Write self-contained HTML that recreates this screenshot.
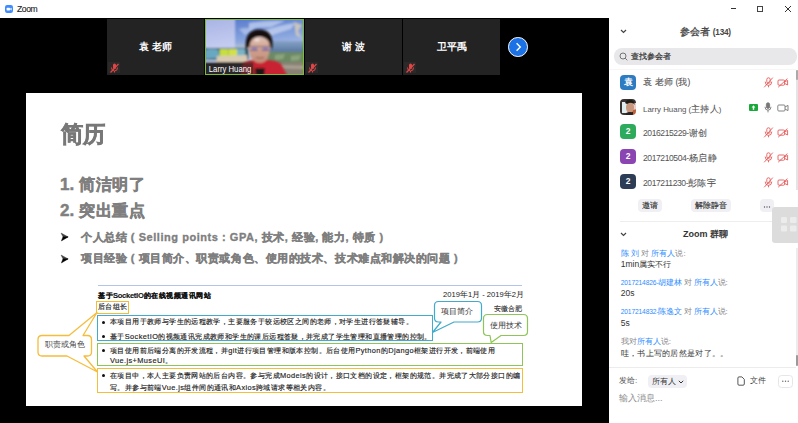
<!DOCTYPE html>
<html><head><meta charset="utf-8">
<style>
*{margin:0;padding:0;box-sizing:border-box}
html,body{width:798px;height:423px;overflow:hidden;background:#000;font-family:"Liberation Sans",sans-serif}
.a{position:absolute;white-space:nowrap}
#title{left:0;top:0;width:798px;height:18px;background:#fff}
.tile{position:absolute;top:19px;height:56px;background:#232323}
.tname{position:absolute;left:0;right:0;top:22px;text-align:center;color:#fff;font-size:9.5px;font-weight:bold}
.mic{position:absolute;left:1px;top:43px;width:12px;height:11px;background:#2a2a2a}
#slide{left:26px;top:93px;width:556px;height:313px;background:#fff}
#panel{left:609px;top:18px;width:189px;height:405px;background:#fff}
.g{color:#7f7f7f;font-weight:bold;-webkit-text-stroke:0.5px #7f7f7f}
.av{position:absolute;left:620.3px;width:15.5px;height:15.5px;border-radius:4px;color:#fff;font-size:8.5px;font-weight:bold;text-align:center;line-height:15.5px}
.pn{position:absolute;left:643px;font-size:8.5px;color:#555;white-space:nowrap}
.cj{font-size:9px;letter-spacing:0.4px;-webkit-text-stroke:0.1px #555}
.blue{color:#2d8cff}
.cg{color:#888}
.msg{position:absolute;left:620.7px;font-size:8px;color:#333;white-space:nowrap}
.btn{position:absolute;top:199px;height:13px;border-radius:4px;background:#f0f0f4;font-size:8px;color:#333;-webkit-text-stroke:0.15px #333;text-align:center;line-height:13px}
.rt{position:absolute;white-space:nowrap;font-size:7.4px;letter-spacing:0.39px;color:#222;-webkit-text-stroke:0.15px #222}
.box{position:absolute;border:1.3px solid}
</style></head><body>
<div class="a" id="title"></div>

<!-- title bar -->
<div class="a" style="left:5px;top:4.5px;width:8.3px;height:8.3px;border-radius:2.2px;background:#3d8bff"></div>
<svg class="a" style="left:5.1px;top:4.6px" width="8" height="8"><rect x="1.6" y="2.8" width="3.4" height="2.6" rx="0.6" fill="#fff"/><path d="M5.2 3.6 L6.6 2.8 V5.4 L5.2 4.6Z" fill="#fff"/></svg>
<div class="a" style="left:17px;top:4.2px;font-size:8.6px;letter-spacing:-0.4px;color:#222;-webkit-text-stroke:0.1px #222">Zoom</div>
<div class="a" style="left:730.5px;top:8.3px;width:5.5px;height:1px;background:#333"></div>
<div class="a" style="left:757px;top:5.5px;width:6.3px;height:6.3px;border:0.9px solid #444"></div>
<svg class="a" style="left:784px;top:5px" width="8" height="8"><path d="M1 1 L7 7 M7 1 L1 7" stroke="#333" stroke-width="1"/></svg>

<!-- tiles -->
<div class="tile" style="left:107px;width:97px"><div class="tname">袁 老师</div><div class="mic"></div></div>
<div class="tile" style="left:305px;width:97px"><div class="tname">谢 波</div><div class="mic"></div></div>
<div class="tile" style="left:403px;width:97px"><div class="tname">卫平禹</div><div class="mic"></div></div>
<svg class="a" style="left:109px;top:63px" width="11" height="10"><g fill="#e04545"><rect x="4" y="0.5" width="3" height="5.5" rx="1.5"/><path d="M2.5 4.5 Q2.5 8 5.5 8 Q8.5 8 8.5 4.5" stroke="#e04545" fill="none" stroke-width="1"/><rect x="5" y="8" width="1" height="1.5"/><path d="M1.5 9.5 L9.5 1" stroke="#e04545" stroke-width="1.2"/></g></svg>
<svg class="a" style="left:307px;top:63px" width="11" height="10"><g fill="#e04545"><rect x="4" y="0.5" width="3" height="5.5" rx="1.5"/><path d="M2.5 4.5 Q2.5 8 5.5 8 Q8.5 8 8.5 4.5" stroke="#e04545" fill="none" stroke-width="1"/><rect x="5" y="8" width="1" height="1.5"/><path d="M1.5 9.5 L9.5 1" stroke="#e04545" stroke-width="1.2"/></g></svg>
<svg class="a" style="left:405px;top:63px" width="11" height="10"><g fill="#e04545"><rect x="4" y="0.5" width="3" height="5.5" rx="1.5"/><path d="M2.5 4.5 Q2.5 8 5.5 8 Q8.5 8 8.5 4.5" stroke="#e04545" fill="none" stroke-width="1"/><rect x="5" y="8" width="1" height="1.5"/><path d="M1.5 9.5 L9.5 1" stroke="#e04545" stroke-width="1.2"/></g></svg>

<!-- video -->
<svg class="a" style="left:205px;top:19px" width="99" height="56" viewBox="0 0 99 56">
<defs>
<linearGradient id="sky" x1="0" y1="0" x2="0.2" y2="1"><stop offset="0" stop-color="#4d72c9"/><stop offset="0.45" stop-color="#89a5de"/><stop offset="0.75" stop-color="#c3d0ee"/></linearGradient>
<linearGradient id="wall" x1="0" y1="0" x2="0.2" y2="1"><stop offset="0" stop-color="#a6b2e2"/><stop offset="1" stop-color="#c4ccf0"/></linearGradient>
<linearGradient id="sea" x1="0" y1="0" x2="0" y2="1"><stop offset="0" stop-color="#86a2c6"/><stop offset="1" stop-color="#5a78a0"/></linearGradient>
<linearGradient id="face" x1="0" y1="0" x2="0" y2="1"><stop offset="0" stop-color="#e2c2b6"/><stop offset="0.4" stop-color="#d2a592"/><stop offset="1" stop-color="#c28c78"/></linearGradient>
<filter id="bl" x="-0.1" y="-0.1" width="1.2" height="1.2"><feGaussianBlur stdDeviation="0.9"/></filter>
</defs>
<g filter="url(#bl)">
<rect x="-2" y="-2" width="103" height="60" fill="url(#sky)"/>
<path d="M44 4 Q62 1 80 2 L66 8 Q52 8 44 10Z" fill="#e6edf9" opacity="0.55"/>
<path d="M58 12 Q74 6 90 4 L86 10 Q72 14 62 18Z" fill="#eef2fa" opacity="0.5"/>
<path d="M34 10 Q42 8 50 10 L40 16Z" fill="#dfe7f6" opacity="0.45"/>
<rect x="-2" y="-2" width="32" height="32" fill="url(#wall)"/>
<rect x="30" y="25" width="14" height="6" fill="#a4b8d2"/>
<rect x="60" y="22" width="41" height="11" fill="url(#sea)"/>
<path d="M56 33 L101 33 L101 45 L56 45Z" fill="#6c8a64"/>
<path d="M70 36 L80 35 L78 40 L70 41Z M86 37 L96 36 L94 41 L86 42Z" fill="#9ab08a" opacity="0.7"/>
<path d="M60 44 L101 43 L101 58 L60 58Z" fill="#8b8276"/>
<path d="M68 46 L101 47 L101 50 L68 49Z" fill="#aaa294"/>
<path d="M89 3 L97 6 L93 12 L96 19 L91 16Z" fill="#d6ccb4" opacity="0.85"/>
<rect x="-2" y="29" width="46" height="12" fill="#385c6c"/>
<path d="M0 31 Q6 29 13 30.5 L15 39 L0 40Z" fill="#69a8c0"/>
<rect x="14.5" y="30" width="9" height="8.5" fill="#c8df3e"/>
<rect x="23.5" y="30" width="8.5" height="8" fill="#d2e244"/>
<rect x="32" y="30" width="8" height="9" fill="#7ab2c6"/>
<path d="M12 37 L42 36 L43 43.5 L11 43.5Z" fill="#d9cab2"/>
<rect x="-2" y="43" width="48" height="15" fill="#2e2c2e"/>
</g>
<g filter="url(#bl)">
<path d="M36 58 L37 46 Q42 41 49 41 L61 41 Q71 41 76 45 L83 58Z" fill="#c92230"/>
<path d="M37 58 L37 46 Q42 42 48 42 L50 58Z" fill="#5a2a2a" opacity="0.6"/>
<path d="M50 49 L60 49 L59 58 L51 58Z" fill="#1b1819"/>
<path d="M43.5 18 Q42.5 33 46.5 39.5 Q50.5 44 55 44 Q59.5 44 62.5 39.5 Q66 33 65.5 18Z" fill="url(#face)"/>
<path d="M41 31 Q38.5 12 53 10.5 Q68 10 67.5 26 L67 31 L65 27 Q64.5 19 55 17.5 Q45.5 18 44.5 27Z" fill="#151111"/>
<path d="M45.5 27.5 H53 V32 H45.5Z M56.5 27.5 H64.5 V32 H56.5Z" fill="#8a80c8" opacity="0.4"/><path d="M47.5 29 H51.5 V30.5 H47.5Z M58.5 29 H62.5 V30.5 H58.5Z" fill="#5a48c8" opacity="0.6"/>
<path d="M44.5 27.5 H65 M44.5 31.5 H53 M56.5 31.5 H65" stroke="#3c3444" stroke-width="0.5"/>
<ellipse cx="52" cy="21" rx="2.5" ry="1.5" fill="#f6ece6" opacity="0.8"/>
<path d="M51 38.5 Q55 40 59 38.5" stroke="#8d5548" stroke-width="1" fill="none"/>
</g>
<rect x="0.5" y="0.5" width="98" height="55" fill="none" stroke="#7cbf2e" stroke-width="1"/>
<rect x="1" y="44.5" width="47" height="10.5" fill="#222" opacity="0.35"/>
<text x="3.8" y="53" font-size="8.8" fill="#fff" font-family="Liberation Sans" textLength="42.5" lengthAdjust="spacingAndGlyphs">Larry Huang</text>
</svg>

<!-- arrow -->
<div class="a" style="left:508.2px;top:37.3px;width:19.6px;height:19.6px;border-radius:50%;background:#1b72e6;border:1.9px solid #fff"></div>
<svg class="a" style="left:508px;top:37px" width="20" height="20"><path d="M8.6 6.2 L12.3 10 L8.6 13.8" stroke="#fff" stroke-width="1.4" fill="none"/></svg>

<!-- slide -->
<div class="a" id="slide"></div>
<div class="a g" style="left:61.3px;top:119px;font-size:22px;color:#787878;-webkit-text-stroke:0.6px #787878;transform:scaleY(1.03);transform-origin:0 0">简历</div>
<div class="a g" style="left:60px;top:174.5px;font-size:17px">1. <span style="font-size:16px;letter-spacing:0.7px">简洁明了</span></div>
<div class="a g" style="left:60px;top:201px;font-size:17px">2. <span style="font-size:16px;letter-spacing:0.7px">突出重点</span></div>
<svg class="a" style="left:59px;top:232px" width="12" height="12" viewBox="0 0 12 12"><path d="M2.1 1.1 L9.1 4.9 L4 4.9Z" fill="#444" stroke="#444" stroke-width="0.5" stroke-linejoin="round"/><path d="M4 4.9 L9.1 4.9 L2.5 8.8Z" fill="#000" stroke="#000" stroke-width="0.6" stroke-linejoin="round"/></svg>
<svg class="a" style="left:59px;top:253.5px" width="12" height="12" viewBox="0 0 12 12"><path d="M2.1 1.1 L9.1 4.9 L4 4.9Z" fill="#444" stroke="#444" stroke-width="0.5" stroke-linejoin="round"/><path d="M4 4.9 L9.1 4.9 L2.5 8.8Z" fill="#000" stroke="#000" stroke-width="0.6" stroke-linejoin="round"/></svg>
<div class="a g" style="left:81px;top:230px;font-size:11px;letter-spacing:0.55px;-webkit-text-stroke:0.35px #7f7f7f">个人总结 ( Selling points : GPA, 技术, 经验, 能力, 特质 )</div>
<div class="a g" style="left:81px;top:250.5px;font-size:11px;letter-spacing:0.55px;-webkit-text-stroke:0.35px #7f7f7f">项目经验 ( 项目简介、职责或角色、使用的技术、技术难点和解决的问题 )</div>

<!-- resume image -->
<div class="a" style="left:98px;top:285px;width:424px;height:1.3px;background:#b3c3ea"></div>
<div class="a" style="left:98px;top:291px;font-size:7.4px;letter-spacing:0.5px;font-weight:bold;color:#111;-webkit-text-stroke:0.1px #111">基于<span style="font-size:7.6px;letter-spacing:-0.3px">SocketIO</span>的在线视频通讯网站</div>
<div class="a" style="left:443px;top:290px;font-size:7.6px;color:#222">2019年1月 - 2019年2月</div>
<div class="a" style="left:493.5px;top:303.5px;font-size:7.4px;letter-spacing:0.25px;color:#222;-webkit-text-stroke:0.1px #222">安徽合肥</div>
<div class="box" style="left:96px;top:300.5px;width:33px;height:13.8px;border-color:#f5bb35;border-width:1.8px"></div>
<div class="a" style="left:97.8px;top:302px;font-size:7.4px;letter-spacing:0.5px;color:#2a2a2a;-webkit-text-stroke:0.2px #2a2a2a">后台组长</div>
<div class="box" style="left:97px;top:314.8px;width:336px;height:26.2px;border-color:#42aacb;border-width:1.6px"></div>
<div class="box" style="left:97px;top:342.8px;width:426px;height:23px;border-color:#8dc558;border-width:1.6px"></div>
<div class="box" style="left:97px;top:368.3px;width:426px;height:24.4px;border-color:#f5bd3c;border-width:1.6px"></div>
<div class="a" style="left:101.6px;top:320.5px;width:3.2px;height:3.2px;border-radius:50%;background:#111"></div>
<div class="a" style="left:101.6px;top:334.5px;width:3.2px;height:3.2px;border-radius:50%;background:#111"></div>
<div class="a" style="left:101.6px;top:348.5px;width:3.2px;height:3.2px;border-radius:50%;background:#111"></div>
<div class="a" style="left:101.6px;top:373.5px;width:3.2px;height:3.2px;border-radius:50%;background:#111"></div>
<div class="rt" style="left:110px;top:317.4px">本项目用于教师与学生的远程教学，主要服务于较远校区之间的老师，对学生进行答疑辅导。</div>
<div class="rt" style="left:110px;top:331.6px">基于SocketIO的视频通讯完成教师和学生的课后远程答疑，并完成了学生管理和直播管理的控制。</div>
<div class="rt" style="left:110px;top:345.6px">项目使用前后端分离的开发流程，并git进行项目管理和版本控制。后台使用Python的Django框架进行开发，前端使用</div>
<div class="rt" style="left:110px;top:355.7px">Vue.js+MuseUI。</div>
<div class="rt" style="left:110px;top:370.6px">在项目中，本人主要负责网站的后台内容。参与完成Models的设计，接口文档的设定，框架的规范。并完成了大部分接口的编</div>
<div class="rt" style="left:110px;top:382.7px">写。并参与前端Vue.js组件间的通讯和Axios跨域请求等相关内容。</div>
<svg class="a" style="left:30px;top:295px" width="510" height="105" viewBox="30 295 510 105">
<g fill="#fff" stroke="#f5bd3c" stroke-width="1.3" stroke-linejoin="round">
<path d="M42 335.5 H69 L97 312.5 L83 335.5 H87.5 Q91.5 335.5 91.5 339.5 V352 Q91.5 356 87.5 356 H84 L97.5 372 L67 356 H42 Q38 356 38 352 V339.5 Q38 335.5 42 335.5Z"/>
</g>
<g fill="#fff" stroke="#42aacb" stroke-width="1.2" stroke-linejoin="round">
<path d="M438.5 301.5 H477.5 Q481.5 301.5 481.5 305.5 V318 Q481.5 322 477.5 322 H454 L432.5 332.5 L441 322 H438.5 Q434.5 322 434.5 318 V305.5 Q434.5 301.5 438.5 301.5Z"/>
</g>
<g fill="#fff" stroke="#8dc558" stroke-width="1.2" stroke-linejoin="round">
<path d="M487.5 314.5 H523.5 Q527.5 314.5 527.5 318.5 V331.5 Q527.5 335.5 523.5 335.5 H501 L491.2 342.6 L490 335.5 H487.5 Q483.5 335.5 483.5 331.5 V318.5 Q483.5 314.5 487.5 314.5Z"/>
</g>
</svg>
<div class="a" style="left:44.5px;top:339px;font-size:8.3px;color:#444;letter-spacing:0.2px">职责或角色</div>
<div class="a" style="left:441px;top:306px;font-size:8.2px;color:#333">项目简介</div>
<div class="a" style="left:490px;top:319.5px;font-size:8.2px;color:#333">使用技术</div>

<div class="a" id="panel"></div>
<!-- panel header -->
<svg class="a" style="left:620px;top:29px" width="7" height="5"><path d="M1 1 L3.5 3.5 L6 1" stroke="#444" stroke-width="1.2" fill="none"/></svg>
<div class="a" style="left:680px;top:25px;font-size:10px;color:#444;-webkit-text-stroke:0.3px #444">参会者 <span style="font-size:8.2px;font-weight:bold;-webkit-text-stroke:0;letter-spacing:-0.2px">(134)</span></div>
<div class="a" style="left:614px;top:48.3px;width:182.7px;height:16.5px;border-radius:8px;background:#e8e8eb"></div>
<svg class="a" style="left:619px;top:52px" width="9" height="9"><circle cx="4" cy="4" r="3" stroke="#666" stroke-width="0.9" fill="none"/><path d="M6.2 6.2 L8.3 8.3" stroke="#666" stroke-width="0.9"/></svg>
<div class="a" style="left:631px;top:51px;font-size:8px;color:#333;-webkit-text-stroke:0.2px #333">查找参会者</div>
<div class="a" style="left:609px;top:68.5px;width:187px;height:1px;background:#f6f6f6"></div>
<div class="a" style="left:796px;top:70px;width:2px;height:120px;background:#e4e4e4"></div>
<div class="a" style="left:796px;top:70px;width:2px;height:10px;background:#aaa;border-radius:1px"></div>

<!-- participants -->
<div class="av" style="top:74.5px;background:#2d7cc1;font-size:9px">袁</div>
<div class="pn" style="top:77px;font-size:8.5px;letter-spacing:0.15px;-webkit-text-stroke:0.1px #555">袁 老师 (我)</div>
<svg class="a" style="left:620px;top:99px" width="16" height="16" viewBox="0 0 16 16"><defs><clipPath id="cp"><rect width="16" height="16" rx="4"/></clipPath><filter id="b2"><feGaussianBlur stdDeviation="0.6"/></filter></defs><g clip-path="url(#cp)"><g filter="url(#b2)"><rect x="-1" y="-1" width="18" height="18" fill="#3a3230"/><rect x="2" y="3" width="6" height="11" fill="#dfeef0"/><rect x="13" y="4" width="4" height="10" fill="#e8d0c8"/><ellipse cx="10" cy="8.5" rx="4" ry="5.5" fill="#c9977e"/><path d="M5 4 Q7 0 11 1 Q15 2 14.5 6 L13 4 Q10 3 7 5Z" fill="#1e1a18"/><path d="M6 14 Q10 12 14 14 L14 17 L6 17Z" fill="#2a2220"/><path d="M13 11 L17 10 L17 17 L13 17Z" fill="#c0603a"/></g></g></svg>
<div class="pn" style="top:102.5px;font-size:7.9px">Larry Huang (<span class="cj" style="letter-spacing:0.2px">主持人</span>)</div>
<div class="a" style="left:749px;top:104px;width:9px;height:7px;background:#1aa83a;border-radius:1px"></div>
<svg class="a" style="left:749px;top:104px" width="9" height="7"><path d="M4.5 1.2 L2.6 3.4 H3.8 V5.8 H5.2 V3.4 H6.4Z" fill="#fff"/></svg>
<svg class="a" style="left:764px;top:102px" width="8" height="11" viewBox="0 0 8 11"><g stroke="#777" fill="none" stroke-width="0.9"><rect x="2.4" y="0.8" width="3.2" height="5.6" rx="1.6" fill="#777"/><path d="M1 4.8 Q1 8.2 4 8.2 Q7 8.2 7 4.8 M4 8.2 V10.4"/></g></svg>
<svg class="a" style="left:777px;top:104px" width="12" height="8" viewBox="0 0 12 8"><g stroke="#777" fill="none" stroke-width="0.9"><rect x="0.8" y="1" width="7.2" height="6" rx="1"/><path d="M8 3 L11 1.4 V6.6 L8 5"/></g></svg>
<svg class="a" style="left:763px;top:127px" width="11" height="11" viewBox="0 0 11 11"><g stroke="#e35a5a" fill="none" stroke-width="0.9"><rect x="3.8" y="0.8" width="3.4" height="5.6" rx="1.7"/><path d="M2.2 4.6 Q2.2 8.4 5.5 8.4 Q8.8 8.4 8.8 4.6 M5.5 8.4 V10.3 M1.2 10.3 L9.8 0.6"/></g></svg><svg class="a" style="left:777px;top:128.3px" width="12" height="10" viewBox="0 0 12 10"><g stroke="#e35a5a" fill="none" stroke-width="0.9"><rect x="1" y="2" width="6.6" height="5.2" rx="1"/><path d="M7.6 3.9 L10.6 2.4 V7 L7.6 5.4 M1.2 9.2 L10.4 0.6"/></g></svg>
<svg class="a" style="left:763px;top:152px" width="11" height="11" viewBox="0 0 11 11"><g stroke="#e35a5a" fill="none" stroke-width="0.9"><rect x="3.8" y="0.8" width="3.4" height="5.6" rx="1.7"/><path d="M2.2 4.6 Q2.2 8.4 5.5 8.4 Q8.8 8.4 8.8 4.6 M5.5 8.4 V10.3 M1.2 10.3 L9.8 0.6"/></g></svg><svg class="a" style="left:777px;top:153.3px" width="12" height="10" viewBox="0 0 12 10"><g stroke="#e35a5a" fill="none" stroke-width="0.9"><rect x="1" y="2" width="6.6" height="5.2" rx="1"/><path d="M7.6 3.9 L10.6 2.4 V7 L7.6 5.4 M1.2 9.2 L10.4 0.6"/></g></svg>
<svg class="a" style="left:763px;top:177px" width="11" height="11" viewBox="0 0 11 11"><g stroke="#e35a5a" fill="none" stroke-width="0.9"><rect x="3.8" y="0.8" width="3.4" height="5.6" rx="1.7"/><path d="M2.2 4.6 Q2.2 8.4 5.5 8.4 Q8.8 8.4 8.8 4.6 M5.5 8.4 V10.3 M1.2 10.3 L9.8 0.6"/></g></svg><svg class="a" style="left:777px;top:178.3px" width="12" height="10" viewBox="0 0 12 10"><g stroke="#e35a5a" fill="none" stroke-width="0.9"><rect x="1" y="2" width="6.6" height="5.2" rx="1"/><path d="M7.6 3.9 L10.6 2.4 V7 L7.6 5.4 M1.2 9.2 L10.4 0.6"/></g></svg>
<svg class="a" style="left:763px;top:77px" width="11" height="11" viewBox="0 0 11 11"><g stroke="#e35a5a" fill="none" stroke-width="0.9"><rect x="3.8" y="0.8" width="3.4" height="5.6" rx="1.7"/><path d="M2.2 4.6 Q2.2 8.4 5.5 8.4 Q8.8 8.4 8.8 4.6 M5.5 8.4 V10.3 M1.2 10.3 L9.8 0.6"/></g></svg><svg class="a" style="left:777px;top:78.3px" width="12" height="10" viewBox="0 0 12 10"><g stroke="#e35a5a" fill="none" stroke-width="0.9"><rect x="1" y="2" width="6.6" height="5.2" rx="1"/><path d="M7.6 3.9 L10.6 2.4 V7 L7.6 5.4 M1.2 9.2 L10.4 0.6"/></g></svg>

<div class="av" style="top:123.8px;background:#2eaa5c">2</div>
<div class="pn" style="top:127px"><span style="font-size:8.6px;letter-spacing:-0.45px">2016215229-</span><span class="cj">谢创</span></div>
<div class="av" style="top:148.8px;background:#8a45b3">2</div>
<div class="pn" style="top:152px"><span style="font-size:8.6px;letter-spacing:-0.45px">2017210504-</span><span class="cj">杨启静</span></div>
<div class="av" style="top:173.6px;background:#2c3d55">2</div>
<div class="pn" style="top:177px"><span style="font-size:8.6px;letter-spacing:-0.45px">2017211230-</span><span class="cj">彭陈宇</span></div>

<div class="btn" style="left:638px;width:24px">邀请</div>
<div class="btn" style="left:691px;width:40px">解除静音</div>
<div class="btn" style="left:760px;width:14px"></div><svg class="a" style="left:760px;top:199px" width="14" height="13"><g fill="#555"><circle cx="4.5" cy="8" r="0.65"/><circle cx="7" cy="8" r="0.65"/><circle cx="9.5" cy="8" r="0.65"/></g></svg>
<div class="a" style="left:620px;top:220.5px;width:170px;height:1px;background:#eee"></div>
<div class="a" style="left:771.8px;top:207.4px;width:27px;height:36px;background:#dcdcdc;border-radius:3px 0 0 3px"></div>
<svg class="a" style="left:780px;top:216px" width="18" height="17"><g fill="#ececec"><rect x="1" y="1" width="6" height="6" rx="1.2"/><rect x="10" y="1" width="6.5" height="6" rx="1.2"/><rect x="1" y="9.5" width="6" height="6" rx="1.2"/><rect x="10" y="9.5" width="6.5" height="6" rx="1.2"/></g></svg>

<!-- chat -->
<svg class="a" style="left:620px;top:232px" width="7" height="5"><path d="M1 1 L3.5 3.5 L6 1" stroke="#444" stroke-width="1.2" fill="none"/></svg>
<div class="a" style="left:683px;top:228px;font-size:9px;color:#333;-webkit-text-stroke:0.35px #333"><span style="font-weight:bold;-webkit-text-stroke:0">Zoom</span> 群聊</div>
<div class="msg" style="top:247.5px"><span class="blue">陈 刘</span> <span class="cg">对</span> <span class="blue">所有人</span><span class="cg">说:</span></div>
<div class="msg" style="top:258.8px"><span style="font-size:8.5px">1min</span>属实不行</div>
<div class="msg" style="top:277px;letter-spacing:-0.15px"><span class="blue"><span style="font-size:6.7px">2017214826-</span>胡建林</span> <span class="cg">对</span> <span class="blue">所有人</span><span class="cg">说:</span></div>
<div class="msg" style="top:288.2px;font-size:8.5px">20s</div>
<div class="msg" style="top:306px;letter-spacing:-0.15px"><span class="blue"><span style="font-size:6.7px">2017214832-</span>陈逸文</span> <span class="cg">对</span> <span class="blue">所有人</span><span class="cg">说:</span></div>
<div class="msg" style="top:318.2px;font-size:8.5px">5s</div>
<div class="msg" style="top:336px"><span class="cg">我对</span><span class="blue">所有人</span><span class="cg">说:</span></div>
<div class="msg" style="top:347.6px;letter-spacing:0.3px">哇，书上写的居然是对了。。</div>
<div class="a" style="left:609px;top:366.5px;width:187px;height:1px;background:#ececec"></div>
<div class="a" style="left:796px;top:248px;width:1.5px;height:118px;background:#ececec"></div>
<div class="a" style="left:795.5px;top:355px;width:2.5px;height:11px;background:#9a9a9a;border-radius:1px"></div>

<div class="a" style="left:619px;top:375px;font-size:8px;color:#555">发给:</div>
<div class="a" style="left:648px;top:375px;width:39px;height:13px;border-radius:4px;background:#f0f0f4"></div>
<div class="a" style="left:652px;top:375px;font-size:8px;color:#333;line-height:13px">所有人</div>
<svg class="a" style="left:678px;top:380px" width="6" height="4"><path d="M0.8 0.8 L3 3 L5.2 0.8" stroke="#333" stroke-width="1" fill="none"/></svg>
<svg class="a" style="left:737px;top:376px" width="8" height="10"><path d="M2 0.9 H4.9 L7.3 3.3 V8 Q7.3 9.2 6.1 9.2 H2 Q0.9 9.2 0.9 8 V2 Q0.9 0.9 2 0.9Z" stroke="#444" stroke-width="0.9" fill="none" stroke-linejoin="round"/></svg>
<div class="a" style="left:750px;top:375px;font-size:8px;color:#444">文件</div>
<div class="a" style="left:778.3px;top:374.5px;width:14.6px;height:13.2px;border-radius:3.5px;border:1px solid #e6e6ea;background:#fff"></div>
<svg class="a" style="left:778px;top:375px" width="15" height="13"><g fill="#666"><circle cx="4.8" cy="6.3" r="0.7"/><circle cx="7.5" cy="6.3" r="0.7"/><circle cx="10.2" cy="6.3" r="0.7"/></g></svg>
<div class="a" style="left:619px;top:391.5px;font-size:9px;color:#8c8c8c">输入消息...</div>
</body></html>
